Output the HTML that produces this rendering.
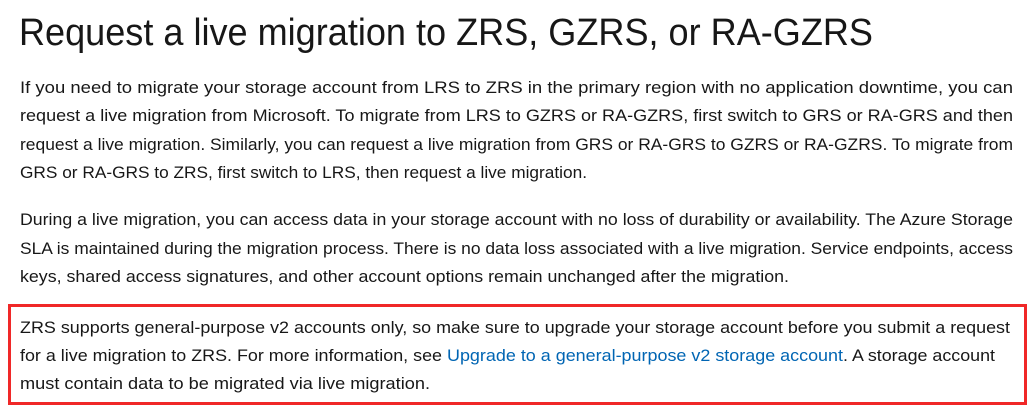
<!DOCTYPE html>
<html><head><meta charset="utf-8"><style>
html,body{margin:0;padding:0;background:#fff;width:1033px;height:411px;overflow:hidden}
svg{display:block}
text{font-family:"Liberation Sans",sans-serif;fill:#171717}
.p{font-size:17px}
.h{font-size:38px}
</style></head><body>
<svg width="1033" height="411" viewBox="0 0 1033 411">
<text class="h" x="19" y="45" textLength="854" lengthAdjust="spacingAndGlyphs">Request a live migration to ZRS, GZRS, or RA-GZRS</text>
<text class="p" x="20" y="93" textLength="993" lengthAdjust="spacingAndGlyphs">If you need to migrate your storage account from LRS to ZRS in the primary region with no application downtime, you can</text>
<text class="p" x="20" y="121" textLength="993" lengthAdjust="spacingAndGlyphs">request a live migration from Microsoft. To migrate from LRS to GZRS or RA-GZRS, first switch to GRS or RA-GRS and then</text>
<text class="p" x="20" y="150" textLength="993" lengthAdjust="spacingAndGlyphs">request a live migration. Similarly, you can request a live migration from GRS or RA-GRS to GZRS or RA-GZRS. To migrate from</text>
<text class="p" x="20" y="178" textLength="567" lengthAdjust="spacingAndGlyphs">GRS or RA-GRS to ZRS, first switch to LRS, then request a live migration.</text>
<text class="p" x="20" y="225" textLength="993" lengthAdjust="spacingAndGlyphs">During a live migration, you can access data in your storage account with no loss of durability or availability. The Azure Storage</text>
<text class="p" x="20" y="254" textLength="993" lengthAdjust="spacingAndGlyphs">SLA is maintained during the migration process. There is no data loss associated with a live migration. Service endpoints, access</text>
<text class="p" x="20" y="282" textLength="769" lengthAdjust="spacingAndGlyphs">keys, shared access signatures, and other account options remain unchanged after the migration.</text>
<text class="p" x="20" y="333" textLength="990" lengthAdjust="spacingAndGlyphs">ZRS supports general-purpose v2 accounts only, so make sure to upgrade your storage account before you submit a request</text>
<text class="p" x="20" y="361" textLength="422" lengthAdjust="spacingAndGlyphs">for a live migration to ZRS. For more information, see</text>
<text class="p" x="447" y="361" textLength="396" lengthAdjust="spacingAndGlyphs" style="fill:#0065b3">Upgrade to a general-purpose v2 storage account</text>
<text class="p" x="843" y="361" textLength="152" lengthAdjust="spacingAndGlyphs">. A storage account</text>
<text class="p" x="20" y="389" textLength="410" lengthAdjust="spacingAndGlyphs">must contain data to be migrated via live migration.</text>
<rect x="9.5" y="305.5" width="1016" height="98" fill="none" stroke="#f02828" stroke-width="3"/>
</svg>
</body></html>
